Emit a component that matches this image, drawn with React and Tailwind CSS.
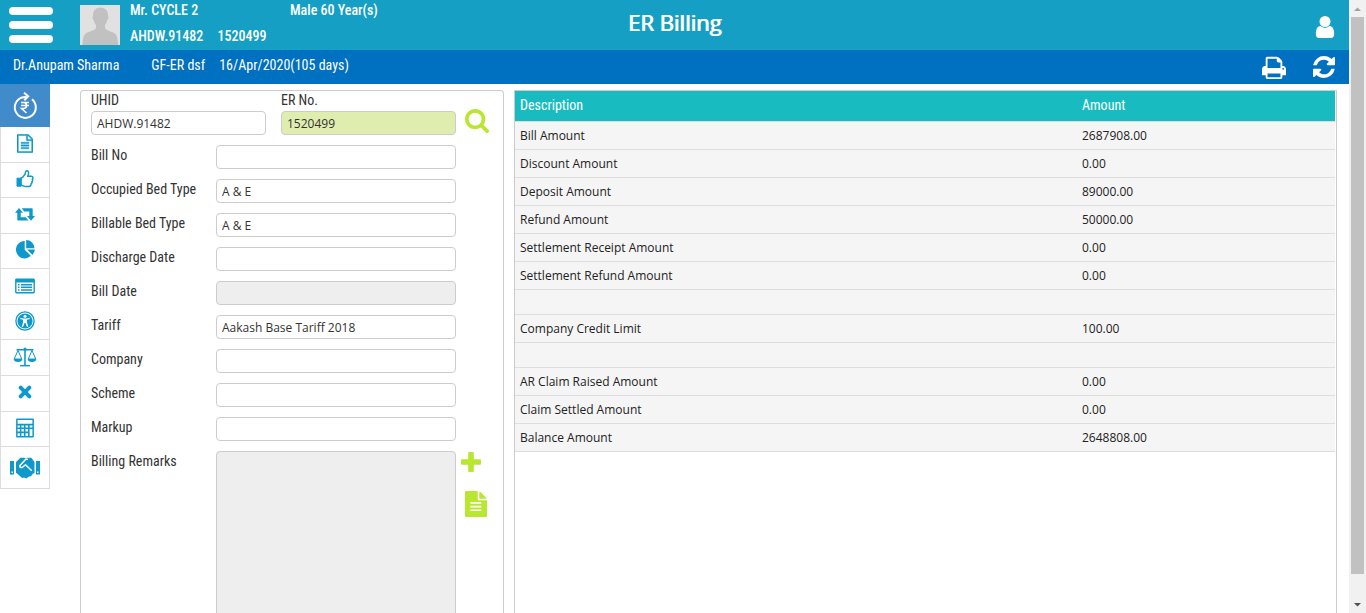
import React from "react";

const OPEN = "font-['Open_Sans',sans-serif]";

function Glyph({ box = "0 0 24 24", className = "", children }) {
  return (
    <svg viewBox={box} className={className} fill="currentColor" aria-hidden="true">
      {children}
    </svg>
  );
}

const PrintIcon = () => (
  <Glyph box="0 0 1664 1664" className="size-6">
    <path d="M384 1536h896v-256H384v256zm0-640h896V512h-160q-40 0-68-28t-28-68V256H384v640zm1152 64q0-26-19-45t-45-19-45 19-19 45 19 45 45 19 45-19 19-45zm128 0v416q0 13-9.5 22.5t-22.5 9.5h-224v160q0 40-28 68t-68 28H352q-40 0-68-28t-28-68v-160H32q-13 0-22.5-9.5T0 1376V960q0-79 56.5-135.5T192 768h64V224q0-40 28-68t68-28h672q40 0 88 20t76 48l152 152q28 28 48 76t20 88v256h64q79 0 135.5 56.5T1664 960z" />
  </Glyph>
);

const RefreshIcon = () => (
  <Glyph box="0 0 1536 1536" className="size-[22px]">
    <path d="M1511 928q0 5-1 7-64 268-268 434.500T764 1536q-146 0-282.500-55T238 1324l-129 129q-19 19-45 19t-45-19-19-45V960q0-26 19-45t45-19h448q26 0 45 19t19 45-19 45l-137 137q71 66 161 102t187 36q134 0 250-65t186-179q11-17 53-117 8-23 30-23h192q13 0 22.500 9.500t9.500 22.500zm25-800v448q0 26-19 45t-45 19h-448q-26 0-45-19t-19-45 19-45l138-138Q969 256 768 256q-134 0-250 65T332 500q-11 17-53 117-8 23-30 23H50q-13 0-22.500-9.500T18 608v-7q65-268 270-434.500T768 0q146 0 284 55.500T1297 212l130-129q19-19 45-19t45 19 19 45z" />
  </Glyph>
);

const UserIcon = () => (
  <Glyph box="0 128 1280 1536" className="h-[22px] w-5">
    <path d="M1280 1399q0 109-62.500 187t-150.500 78H213q-88 0-150.500-78T0 1399q0-85 8.500-160.500t31.500-152 58.500-131 94-89T327 832q131 128 313 128t313-128q76 0 134.500 34.500t94 89 58.500 131 31.500 152 8.500 160.500zm-256-887q0 159-112.500 271.500T640 896 368.500 783.500 256 512t112.500-271.500T640 128t271.500 112.500T1024 512z" />
  </Glyph>
);

const SearchIcon = () => (
  <Glyph box="0 0 1664 1664" className="size-6">
    <path d="M1152 704q0-185-131.500-316.500T704 256 387.500 387.500 256 704t131.500 316.500T704 1152t316.500-131.500T1152 704zm512 832q0 52-38 90t-90 38q-54 0-90-38l-343-342q-179 124-399 124-143 0-273.500-55.500t-225-150-150-225T0 704t55.500-273.500 150-225 225-150T704 0t273.500 55.500 225 150 150 225T1408 704q0 220-124 399l343 343q37 37 37 90z" />
  </Glyph>
);

const BillingIcon = () => (
  <svg viewBox="0 0 26 28" className="h-7 w-[26px]" fill="none" stroke="currentColor" strokeWidth="2" aria-hidden="true">
    <path d="M20 7.300A10.500 10.500 0 1 1 9 5.800L14.500 4.700" />
    <path d="M12 .8 16.200 4.300 12.300 8.200" strokeWidth="2" />
    <path d="M9 10.500h8M9 13.500h8M9 10.500h2.500a3 3 0 0 1 0 6H9.500l5 4.500" strokeWidth="1.500" />
  </svg>
);

const FileOutlineIcon = () => (
  <Glyph box="0 0 1536 1792" className="h-[19px] w-4">
    <path d="M1468 380q28 28 48 76t20 88v1152q0 40-28 68t-68 28H96q-40 0-68-28t-28-68V96q0-40 28-68T96 0h896q40 0 88 20t76 48zm-444-244v376h376q-10-29-22-41l-313-313q-12-12-41-22zm384 1528V640H992q-40 0-68-28t-28-68V128H128v1536h1280zM384 800q0-14 9-23t23-9h704q14 0 23 9t9 23v64q0 14-9 23t-23 9H416q-14 0-23-9t-9-23v-64zm736 224q14 0 23 9t9 23v64q0 14-9 23t-23 9H416q-14 0-23-9t-9-23v-64q0-14 9-23t23-9h704zm0 256q14 0 23 9t9 23v64q0 14-9 23t-23 9H416q-14 0-23-9t-9-23v-64q0-14 9-23t23-9h704z" stroke="currentColor" strokeWidth="40" />
  </Glyph>
);

const ThumbIcon = () => (
  <svg viewBox="0 0 18 18" className="size-[18px]" fill="none" stroke="currentColor" strokeWidth="1.500" strokeLinejoin="round" aria-hidden="true">
    <path d="M5 8.300c2-.6 2.700-2.500 3.800-3.800C9.500 3.600 9 .9 10.700.8c2.400 0 2.300 3 1 5.500h3.600c2 0 2 2.400.9 2.900.8.700.5 2-.4 2.500.5.900 0 2-.8 2.300.2 1.400-.7 2.400-2 2.400H9.500c-1.700 0-2.800-1-4.500-1.100z" />
    <path d="M1 8.200h4v8H1z" fill="currentColor" strokeWidth="1" />
  </svg>
);

const RetweetIcon = () => (
  <Glyph box="0 0 20 13" className="h-[13px] w-5">
    <path d="M4 0 8 4.800H5.700v4.500h5.100l2.500 3.200H3.200a.7.7 0 0 1-.9-.7v-7H0z" />
    <path d="M16 12.700 12 7.900h2.300V3.400H9.200L6.700.2h10.100c.6 0 .9.300.9.700v7H20z" />
  </Glyph>
);

const PieIcon = () => (
  <Glyph box="0 0 19 19" className="size-[19px]">
    <path d="M8.700 1v8.700l6.150 6.150A8.700 8.700 0 1 1 8.700 1z" />
    <path d="M10.200 0a8.300 8.300 0 0 1 8.300 8.300h-8.300z" />
    <path d="M11 9.600h7.900a8.700 8.700 0 0 1-2.500 5.400z" />
  </Glyph>
);

const ListIcon = () => (
  <Glyph box="0 0 20 16" className="h-4 w-5">
    <path fillRule="evenodd" d="M1.500.5h17c.8 0 1.400.6 1.400 1.400v12.200c0 .8-.6 1.400-1.400 1.400h-17c-.8 0-1.400-.6-1.400-1.400V1.900C.1 1.100.7.500 1.500.5zM1.500 4.600v9.500h17V4.600z" />
    <path d="M3 6h1.500v1.500H3zM6 6h11v1.500H6zM3 8.600h1.500v1.500H3zM6 8.600h11v1.500H6zM3 11.200h1.500v1.500H3zM6 11.200h11v1.500H6z" />
  </Glyph>
);

const AccessIcon = () => (
  <Glyph box="0 0 20 20" className="size-5">
    <circle cx="10" cy="10" r="9.100" fill="none" stroke="currentColor" strokeWidth="1.300" />
    <circle cx="10" cy="10" r="7.600" />
    <circle cx="10" cy="5.300" r="1.500" fill="#fff" />
    <path d="M5.400 6.700 8.500 7.400h3l3.100-.7.200 1.200-2.900.9v2.400l1.400 4.300-1.300.5L10.500 12h-1L8 16l-1.300-.5 1.400-4.300V8.800l-2.900-.9z" fill="#fff" />
  </Glyph>
);

const ScaleIcon = () => (
  <svg viewBox="0 0 24 20" className="h-5 w-6" fill="none" stroke="currentColor" aria-hidden="true">
    <path d="M3.500 2.800h17M12 2v16" strokeWidth="1.600" />
    <circle cx="12" cy="2" r="1.500" fill="currentColor" stroke="none" />
    <path d="M7 18.700h10" strokeWidth="1.400" />
    <path d="M5 3.500 1.200 12h7.600zM19 3.500 15.200 12h7.600z" strokeWidth="1" />
    <path d="M.7 12h8.600c0 1.800-1.800 3-4.300 3s-4.300-1.200-4.300-3zM14.700 12h8.600c0 1.800-1.800 3-4.300 3s-4.300-1.200-4.300-3z" fill="currentColor" stroke="none" />
  </svg>
);

const CrossIcon = () => (
  <svg viewBox="0 0 14 14" className="size-[14px]" stroke="currentColor" strokeWidth="4" strokeLinecap="round" aria-hidden="true">
    <path d="m2.700 2.700 8.600 8.600M11.300 2.700l-8.600 8.600" />
  </svg>
);

const CalculatorIcon = () => (
  <Glyph box="0 0 18 20" className="h-5 w-[18px]">
    <path fillRule="evenodd" d="M1 .5h16c.5 0 .9.400.9.900v17.200c0 .5-.4.900-.9.900H1c-.5 0-.9-.4-.9-.9V1.400C.1.900.5.500 1 .5zM1.600 2v3.800h14.800V2zM1.600 7.400v2h2.200v-2zm3.800 0v2h2.500v-2zm4.100 0v2H12v-2zm4.100 0v2h2.800v-2zM1.600 11v2.500h2.200V11zm3.800 0v2.500h2.500V11zm4.100 0v2.500H12V11zm4.100 0v7h2.800v-7zM1.600 15.200V18h2.200v-2.800zm3.800 0V18h2.500v-2.800zm4.100 0V18H12v-2.800z" />
  </Glyph>
);

const HandshakeIcon = () => (
  <Glyph box="0 0 30 22" className="h-[22px] w-[30px]">
    <path d="M0 4h4v13.500H0zM26 4h4v13.500h-4z" />
    <path d="M6 5 10.500.8h4l1.500.7 1.500-.7h3.700L24.500 5v11.500H23l-2 2.700-2.500.6-2 1.600-2.300-.8-2 .3L6.500 16H6z" />
    <path d="M18 2.300h-2.200L10 8.500c-.8 1.700 1.300 2.800 2.800 1.500l2.700-2.300 6.300 6" fill="none" stroke="#fff" strokeWidth="1.500" />
    <path d="M1.500 14.500H3V16H1.500zM27 14.500h1.500V16H27z" fill="#fff" />
  </Glyph>
);

const PlusIcon = () => (
  <Glyph box="0 0 20 20" className="size-5">
    <path d="M8.500 0h3c.8 0 1.300.5 1.300 1.300v5.900h5.900c.8 0 1.300.5 1.300 1.300v3c0 .8-.5 1.300-1.300 1.300h-5.900v5.900c0 .8-.5 1.300-1.300 1.300h-3c-.8 0-1.300-.5-1.300-1.300v-5.900H1.300C.5 12.800 0 12.300 0 11.500v-3c0-.8.500-1.300 1.300-1.300h5.900V1.300C7.200.5 7.700 0 8.500 0z" />
  </Glyph>
);

const FileIcon = () => (
  <Glyph box="0 0 22 26" className="h-[26px] w-[22px]">
    <path fillRule="evenodd" d="M1.200 0h11.500v8c0 .8.500 1.300 1.300 1.300h8v15.400c0 .8-.5 1.300-1.300 1.300H1.200C.5 26 0 25.500 0 24.700V1.300C0 .5.500 0 1.200 0zM5.300 11v1.700h11V11zm0 3.700v1.700h11v-1.700zm0 3.700v1.700h11v-1.700z" />
    <path d="M14.300.4c.5.200.9.400 1.200.7l5.400 5.400c.3.300.5.700.7 1.200h-7.300z" />
  </Glyph>
);

const TOOLS = [
  ["Bill details", FileOutlineIcon],
  ["Approve", ThumbIcon],
  ["Transfer", RetweetIcon],
  ["Summary chart", PieIcon],
  ["Service list", ListIcon],
  ["Patient access", AccessIcon],
  ["Balance", ScaleIcon],
  ["Cancel", CrossIcon],
  ["Calculator", CalculatorIcon],
];

const FIELDS = [
  ["Bill No", ""],
  ["Occupied Bed Type", "A & E"],
  ["Billable Bed Type", "A & E"],
  ["Discharge Date", ""],
  ["Bill Date", "", true],
  ["Tariff", "Aakash Base Tariff 2018"],
  ["Company", ""],
  ["Scheme", ""],
  ["Markup", ""],
];

const ROWS = [
  ["Bill Amount", "2687908.00"],
  ["Discount Amount", "0.00"],
  ["Deposit Amount", "89000.00"],
  ["Refund Amount", "50000.00"],
  ["Settlement Receipt Amount", "0.00"],
  ["Settlement Refund Amount", "0.00"],
  null,
  ["Company Credit Limit", "100.00"],
  null,
  ["AR Claim Raised Amount", "0.00"],
  ["Claim Settled Amount", "0.00"],
  ["Balance Amount", "2648808.00"],
];

const INPUT =
  "block h-6 w-full rounded border border-[#ccc] px-[5px] text-xs text-[#333] outline-none " + OPEN;

function Header() {
  return (
    <header className="text-sm leading-5 text-white">
      <div className="grid h-[50px] grid-cols-[1fr_auto_1fr] bg-[#169fc4] font-medium">
        <div className="flex">
          <button aria-label="Menu" className="ml-[9px] flex w-11 flex-col gap-[6px] pt-[7px]">
            <span className="h-2 w-full rounded-sm bg-white" />
            <span className="h-2 w-full rounded-sm bg-white" />
            <span className="h-2 w-full rounded-sm bg-white" />
          </button>
          <svg viewBox="0 0 40 40" className="mt-[5px] ml-[27px] size-10 shrink-0" role="img" aria-label="Patient">
            <path fill="#e1e1e1" d="M0 0h40v40H0z" />
            <path fill="#c1c1c1" d="M20.500 2.500c5 0 7.800 3.600 7.500 8.500.8.800.5 3.500-.8 4.300-.4 2.200-1.200 3.400-2.200 4.700v3c1 3 10 3.500 11.500 7.500 1 2.500 1.500 6 1.500 9.500H2.500c0-3.500.5-7 1.500-9.500C5.500 26.500 15 26 16 23v-3c-1-1.300-1.800-2.500-2.200-4.700-1.300-.8-1.600-3.500-.8-4.300-.3-4.900 2.500-8.500 7.500-8.500z" />
          </svg>
          <div className="ml-[10px] w-40 shrink-0">
            <div className="whitespace-nowrap">Mr. CYCLE 2</div>
            <div className="mt-[6px] flex gap-[14px]">
              <span>AHDW.91482</span>
              <span>1520499</span>
            </div>
          </div>
          <div className="whitespace-nowrap">Male 60 Year(s)</div>
        </div>
        <h1 className={"pt-[6px] text-[22px] leading-8 font-normal [text-shadow:1px_0_#fff] " + OPEN}>ER Billing</h1>
        <div className="flex justify-end pr-[14px]">
          <button aria-label="User account" className="mt-1">
            <UserIcon />
          </button>
        </div>
      </div>
      <div className="flex h-[34px] bg-[#0070c0] pr-[14px] pl-[13px] whitespace-nowrap">
        <div className="flex gap-[14px] pt-[5px]">
          <span className="mr-[18px]">Dr.Anupam Sharma</span>
          <span>GF-ER dsf</span>
          <span>16/Apr/2020(105 days)</span>
        </div>
        <div className="ml-auto flex items-center gap-[27px]">
          <button aria-label="Print">
            <PrintIcon />
          </button>
          <button aria-label="Refresh">
            <RefreshIcon />
          </button>
        </div>
      </div>
    </header>
  );
}

function Sidebar() {
  return (
    <nav className="flex w-[50px] shrink-0 flex-col text-[#0d99cc]" aria-label="Billing tools">
      <button aria-label="Billing" className="flex h-[43px] items-center justify-center bg-[#428bca] text-white">
        <BillingIcon />
      </button>
      <div className="flex h-80 flex-col border-x border-[#ddd]">
        {TOOLS.map(([name, Icon]) => (
          <button key={name} aria-label={name} className="flex flex-1 items-center justify-center border-b border-[#ddd] pb-[2px]">
            <Icon />
          </button>
        ))}
      </div>
      <button aria-label="Settlement" className="flex h-[42px] items-center justify-center border-x border-b border-[#ddd]">
        <HandshakeIcon />
      </button>
    </nav>
  );
}

function BillForm() {
  return (
    <form className="w-[424px] shrink-0 rounded-t border border-b-0 border-[#ccc] px-[10px] text-sm leading-5 text-[#333]">
      <div className="flex gap-[15px]">
        <div className="w-[175px]">
          <label htmlFor="uhid" className="block pb-[2px] leading-[18px]">UHID</label>
          <input id="uhid" defaultValue="AHDW.91482" className={INPUT} />
        </div>
        <div className="w-[175px]">
          <label htmlFor="er-no" className="block pb-[2px] leading-[18px]">ER No.</label>
          <input id="er-no" defaultValue="1520499" className={INPUT + " bg-[#dfeeaf]"} />
        </div>
        <button type="button" aria-label="Search" className="mt-[15px] -ml-[6px] text-[#b9e62f]">
          <SearchIcon />
        </button>
      </div>
      <div className="mt-[10px] flex flex-col gap-[10px]">
        {FIELDS.map(([name, value, disabled]) => (
          <div key={name} className="flex h-6">
            <label htmlFor={name} className="w-[125px] shrink-0">{name}</label>
            <div className="w-60">
              <input id={name} defaultValue={value} disabled={disabled} className={INPUT + " disabled:bg-[#eee]"} />
            </div>
          </div>
        ))}
        <div className="flex">
          <label htmlFor="remarks" className="w-[125px] shrink-0">Billing Remarks</label>
          <textarea id="remarks" disabled className="h-80 w-60 resize-none rounded border border-[#ccc] bg-[#eee]" />
          <div className="ml-[5px] flex flex-col items-start gap-[19px] pt-px text-[#b9e62f]">
            <button type="button" aria-label="Add remark">
              <PlusIcon />
            </button>
            <button type="button" aria-label="View remarks" className="ml-1">
              <FileIcon />
            </button>
          </div>
        </div>
      </div>
    </form>
  );
}

function Totals() {
  return (
    <section className="min-w-0 flex-1 border border-b-0 border-[#ccc] pr-px">
      <table className="w-full table-fixed border-collapse text-left">
        <thead>
          <tr className="h-[30px] bg-[#18bcc0] text-sm text-white">
            <th className="w-[562px] px-[5px] pb-[2px] font-normal">Description</th>
            <th className="px-[5px] pb-[2px] font-normal">Amount</th>
          </tr>
        </thead>
        <tbody className={"text-xs font-medium text-[#222] " + OPEN}>
          {ROWS.map((row, i) =>
            row ? (
              <tr key={i} className="h-7 border-t border-b border-[#ddd] bg-[#f5f5f5]">
                <td className="px-[5px] pt-[2px]">{row[0]}</td>
                <td className="px-[5px] pt-[2px]">{row[1]}</td>
              </tr>
            ) : (
              <tr key={i} className="h-[25px] border-t border-b border-[#ddd] bg-[#f5f5f5]">
                <td colSpan={2} />
              </tr>
            )
          )}
        </tbody>
      </table>
    </section>
  );
}

function ScrollTrack() {
  return (
    <div className="flex w-[17px] shrink-0 flex-col items-center bg-[#f1f1f1]" aria-hidden="true">
      <svg viewBox="0 0 17 17" className="size-[17px] shrink-0">
        <path d="M5 11h7L8.500 7.500z" fill="#a3a3a3" />
      </svg>
      <div className="w-[13px] grow-[557] bg-[#c1c1c1]" />
      <div className="grow-[22]" />
      <svg viewBox="0 0 17 17" className="size-[17px] shrink-0">
        <path d="M5 7h7l-3.500 3.500z" fill="#505050" />
      </svg>
    </div>
  );
}

export default function App() {
  return (
    <div className="flex h-screen overflow-hidden bg-white font-['Roboto_Condensed',Roboto,sans-serif]">
      <div className="flex min-w-0 flex-1 flex-col">
        <Header />
        <div className="flex min-h-0 flex-1">
          <Sidebar />
          <main className="ml-[30px] flex min-w-0 flex-1 gap-[10px] overflow-hidden pt-[6px] pr-3">
            <BillForm />
            <Totals />
          </main>
        </div>
      </div>
      <ScrollTrack />
    </div>
  );
}
